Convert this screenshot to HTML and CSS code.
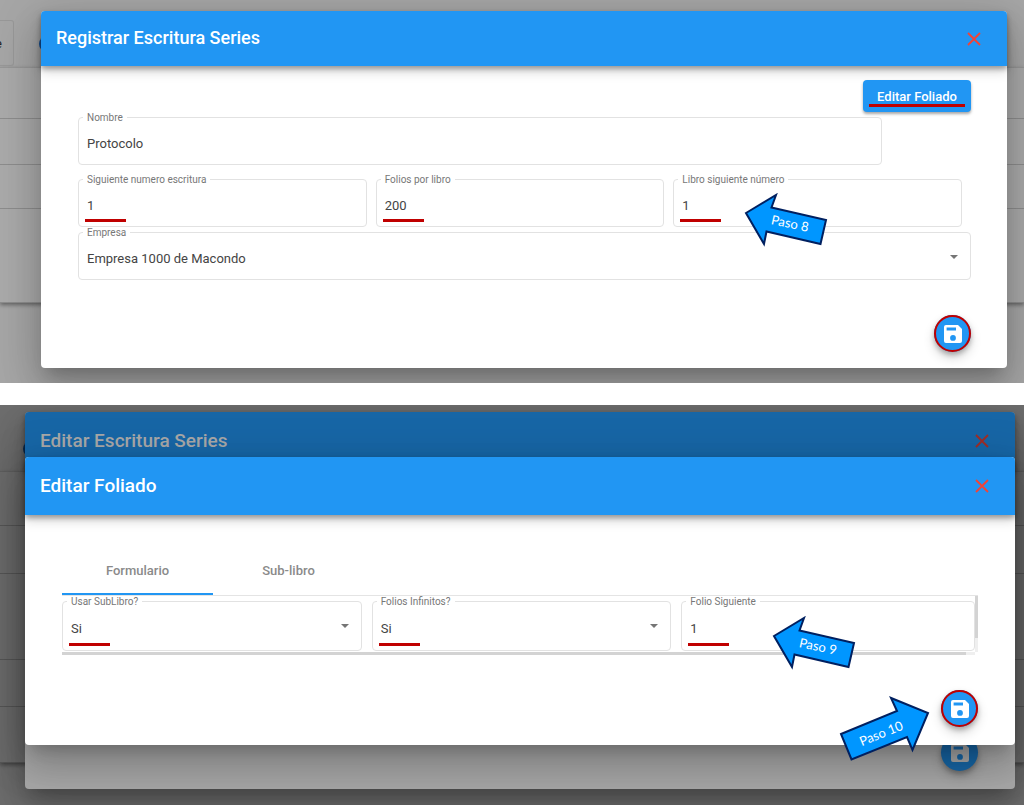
FILE: index.html
```html
<!DOCTYPE html>
<html lang="es">
<head>
    <meta charset="UTF-8">
    <meta name="viewport" content="width=device-width, initial-scale=1.0">
    <title>Escritura Series</title>
    <link rel="stylesheet" href="styles.css">
</head>
<body>

    <svg class="symbols" aria-hidden="true">
        <symbol id="icon-save" viewBox="0 0 24 24">
            <path fill-rule="evenodd" d="M17 3H5a2 2 0 0 0-2 2v14a2 2 0 0 0 2 2h14a2 2 0 0 0 2-2V7zM12 18.800a2.900 2.900 0 1 1 0-5.800 2.900 2.900 0 0 1 0 5.800zM15 8.600H5.600V5.500H15z"/>
        </symbol>
        <symbol id="icon-close" viewBox="0 0 14 14">
            <path d="M1 1l12 12M13 1L1 13" fill="none" stroke="currentColor" stroke-width="1.800"/>
        </symbol>
        <symbol id="arrow-left" viewBox="0 0 84 54">
            <path d="M2 20L32 2L27.500 14.500L82 27L76.500 51L22.500 38.500L20 51z"/>
        </symbol>
    </svg>

    <!-- Registrar -->
    <section class="screen">
        <div class="page">
            <div class="page-bar">
                <span class="page-box">e</span>
                <span class="page-dot"></span>
            </div>
            <div class="page-card">
                <div class="page-row h-51"></div>
                <div class="page-row h-46"></div>
                <div class="page-row h-44"></div>
                <div class="page-row h-94"></div>
            </div>
            <div class="page-foot tall"></div>
        </div>

        <div class="dialog dialog-register">
            <header class="dialog-header">
                <h2>Registrar Escritura Series</h2>
                <button class="close" aria-label="Cerrar"><svg><use href="#icon-close"/></svg></button>
            </header>
            <form class="dialog-body">
                <button type="button" class="btn"><span>Editar Foliado</span></button>
                <fieldset class="field field-name">
                    <legend><label for="nombre">Nombre</label></legend>
                    <input type="text" id="nombre" value="Protocolo">
                </fieldset>
                <div class="field-row">
                    <fieldset class="field marked">
                        <legend><label for="escritura">Siguiente numero escritura</label></legend>
                        <input type="text" id="escritura" value="1">
                    </fieldset>
                    <fieldset class="field marked">
                        <legend><label for="folios">Folios por libro</label></legend>
                        <input type="text" id="folios" value="200">
                    </fieldset>
                    <fieldset class="field marked">
                        <legend><label for="libro">Libro siguiente número</label></legend>
                        <input type="text" id="libro" value="1">
                        <svg class="step step-8" viewBox="0 0 84 54">
                            <use href="#arrow-left"/>
                            <text x="46" y="35" transform="rotate(12 46 30)">Paso 8</text>
                        </svg>
                    </fieldset>
                </div>
                <fieldset class="field field-select">
                    <legend><label for="empresa">Empresa</label></legend>
                    <select id="empresa"><option>Empresa 1000 de Macondo</option></select>
                </fieldset>
                <div class="actions">
                    <button type="button" class="fab ringed" aria-label="Guardar"><svg><use href="#icon-save"/></svg></button>
                </div>
            </form>
        </div>
    </section>

    <!-- Foliado -->
    <section class="screen screen-dark">
        <div class="page">
            <div class="page-bar">
                <span class="page-dot"></span>
            </div>
            <div class="page-card">
                <div class="page-row h-54"></div>
                <div class="page-row h-48"></div>
                <div class="page-row h-86"></div>
                <div class="page-row h-47"></div>
                <div class="page-row h-56"></div>
            </div>
            <div class="page-foot"></div>
        </div>

        <div class="dialog dialog-back">
            <header class="dialog-header">
                <h2>Editar Escritura Series</h2>
                <button class="close" aria-label="Cerrar"><svg><use href="#icon-close"/></svg></button>
            </header>
            <div class="actions">
                <button type="button" class="fab" aria-label="Guardar"><svg><use href="#icon-save"/></svg></button>
            </div>
        </div>

        <div class="dialog dialog-front">
            <header class="dialog-header">
                <h2>Editar Foliado</h2>
                <button class="close" aria-label="Cerrar"><svg><use href="#icon-close"/></svg></button>
            </header>
            <form class="dialog-body">
                <div class="tabs" role="tablist">
                    <button type="button" class="tab active" role="tab" aria-selected="true">Formulario</button>
                    <button type="button" class="tab" role="tab" aria-selected="false">Sub-libro</button>
                </div>
                <div class="scroller">
                    <div class="field-row">
                        <fieldset class="field field-select marked">
                            <legend><label for="sublibro">Usar SubLibro?</label></legend>
                            <select id="sublibro"><option>Si</option></select>
                        </fieldset>
                        <fieldset class="field field-select marked">
                            <legend><label for="infinitos">Folios Infinitos?</label></legend>
                            <select id="infinitos"><option>Si</option></select>
                        </fieldset>
                        <fieldset class="field marked">
                            <legend><label for="siguiente">Folio Siguiente</label></legend>
                            <input type="text" id="siguiente" value="1">
                            <svg class="step step-9" viewBox="0 0 84 54">
                                <use href="#arrow-left"/>
                                <text x="46" y="35" transform="rotate(12 46 30)">Paso 9</text>
                            </svg>
                        </fieldset>
                    </div>
                    <div class="bar bar-y"><div class="thumb"></div></div>
                    <div class="bar bar-x"><div class="thumb"></div></div>
                </div>
                <div class="actions">
                    <button type="button" class="fab ringed" aria-label="Guardar"><svg><use href="#icon-save"/></svg></button>
                    <svg class="step step-10" viewBox="0 0 92 66">
                        <path d="M3 38L59 15L53 2L90 17L74.500 54L69 41L13.500 63.500z"/>
                        <text x="43" y="42" transform="rotate(-22 43 37)">Paso 10</text>
                    </svg>
                </div>
            </form>
        </div>
    </section>

</body>
</html>
```
FILE: styles.css
```css
* {
    box-sizing: border-box;
}
body {
    margin: 0;
    background: #fff;
    font-family: Roboto, Arial, sans-serif;
    color: #444;
}
button, input, select {
    font-family: inherit;
    border: none;
    background: none;
    padding: 0;
    margin: 0;
}
button {
    cursor: pointer;
}
.symbols {
    display: none;
}

/* Each screen stacks the dimmed page and its dialogs in one cell */
.screen {
    display: grid;
    overflow: hidden;
    background: #a6a6a6;
    margin-bottom: 22px;
}
.screen > * {
    grid-area: 1 / 1;
    min-width: 0;
}
.screen-dark {
    background: #6e6e6e;
    margin-bottom: 0;
}

/* Dimmed page */
.page-bar {
    display: flex;
    align-items: flex-start;
    height: 67px;
    padding-top: 20px;
}
.page-box {
    width: 14px;
    height: 46px;
    border: 1px solid #989898;
    border-left: none;
    border-radius: 0 3px 3px 0;
    font-size: 13px;
    line-height: 46px;
    color: #222;
    text-indent: -5px;
}
.page-dot {
    width: 16px;
    height: 16px;
    margin: 16px 0 0 25px;
    border-radius: 50%;
    background: #16529a;
}
.page-card {
    border-top: 1px solid #979797;
    background: #aaa;
    box-shadow: 0 2px 4px rgba(0, 0, 0, 0.4);
}
.page-row {
    border-bottom: 1px solid #8d8d8d;
}
.h-44 { height: 44px; }
.h-46 { height: 46px; }
.h-47 { height: 47px; }
.h-48 { height: 48px; }
.h-51 { height: 51px; }
.h-54 { height: 54px; }
.h-56 { height: 56px; }
.h-86 { height: 86px; }
.h-94 { height: 94px; }
.page-foot {
    height: 42px;
}
.page-foot.tall {
    height: 80px;
}
.screen-dark .page-bar {
    height: 66px;
}
.screen-dark .page-dot {
    margin-left: 23px;
    background: #0e335e;
}
.screen-dark .page-card {
    border-color: #626262;
    background: #707070;
}
.screen-dark .page-row {
    border-color: #5a5a5a;
}

/* Dialogs */
.dialog {
    position: relative;
    display: flex;
    flex-direction: column;
    border-radius: 4px;
    background: #fff;
    box-shadow: 0 11px 15px -7px rgba(0, 0, 0, 0.2),
                0 24px 38px 3px rgba(0, 0, 0, 0.14),
                0 9px 46px 8px rgba(0, 0, 0, 0.12);
}
.dialog-register {
    margin: 11px 17px 15px 41px;
}
.dialog-back {
    z-index: 1;
    margin: 7px 9px 16px 25px;
    background: #a8a8a8;
}
.dialog-front {
    z-index: 2;
    margin: 52px 9px 60px 25px;
}
.dialog-header {
    display: flex;
    align-items: center;
    justify-content: space-between;
    height: 55px;
    padding: 0 26px 0 15px;
    border-radius: 4px 4px 0 0;
    background: #2196f3;
    color: #fff;
    box-shadow: 0 3px 5px rgba(0, 0, 0, 0.3), 0 6px 12px rgba(0, 0, 0, 0.16);
}
.dialog-header h2 {
    margin: 0;
    padding-bottom: 2px;
    font-size: 19px;
    font-weight: 500;
}
.dialog-register .dialog-header h2 {
    font-size: 18px;
}
.dialog-back .dialog-header {
    height: 58px;
    background: #1766a6;
    color: #a8a8a8;
}
.dialog-front .dialog-header {
    height: 58px;
}
.close {
    display: flex;
    color: #f44336;
}
.close svg {
    width: 14px;
    height: 14px;
}
.dialog-back .close {
    color: #a02d26;
}
.dialog-body {
    display: flex;
    flex-direction: column;
    padding: 14px 36px 16px 37px;
}
.dialog-front .dialog-body {
    padding: 32px 37px 18px;
}

.btn {
    align-self: flex-end;
    width: 108px;
    height: 32px;
    border-radius: 4px;
    background: #2196f3;
    color: #fff;
    font-size: 13px;
    font-weight: 500;
    box-shadow: 0 2px 3px rgba(0, 0, 0, 0.35);
}
.btn span {
    display: block;
    margin: 0 6px;
    padding-top: 4px;
    line-height: 15px;
    border-bottom: 3px solid #c00000;
}

/* Outlined fields, the legend cuts the border */
.field {
    position: relative;
    min-width: 0;
    height: 53px;
    margin: 0;
    padding: 5px 4px 0;
    border: 1px solid #e2e2e2;
    border-radius: 4px;
}
.field legend {
    height: 10px;
    padding: 0 4px;
    font-size: 10px;
    line-height: 12px;
    color: #777;
}
.field legend label {
    display: block;
}
.field input, .field select {
    display: block;
    width: 100%;
    height: 32px;
    padding: 0 4px;
    font-size: 13px;
    color: #444;
    outline: none;
    appearance: none;
}
.field-name {
    width: 90%;
    margin-bottom: 9px;
}
.field-row {
    display: grid;
    grid-template-columns: 1fr 1fr 1fr;
    gap: 9px;
    margin-right: 9px;
}
.field-select::after {
    content: "";
    position: absolute;
    right: 12px;
    top: 18px;
    border: 4px solid transparent;
    border-top-color: #757575;
    border-bottom: none;
}
.marked::before {
    content: "";
    position: absolute;
    left: 6px;
    bottom: 4px;
    width: 41px;
    height: 3px;
    background: #c00000;
}

/* Tabs */
.tabs {
    display: flex;
    border-bottom: 1px solid #e4e4e4;
}
.tab {
    width: 151px;
    height: 48px;
    border-bottom: 2px solid transparent;
    font-size: 13px;
    font-weight: 500;
    color: #8a8a8a;
}
.tab.active {
    border-color: #2196f3;
}
.scroller {
    display: grid;
    grid-template-columns: 1fr 3px;
}
.scroller .field-row {
    grid-template-columns: 1fr 1fr 0.98fr;
    gap: 10px;
    margin: 0 0 1px;
}
.scroller .field {
    height: 55px;
}
.scroller .field input, .scroller .field select {
    height: 34px;
}
.bar {
    background: #efefef;
}
.bar .thumb {
    background: #d3d3d3;
}
.bar-y .thumb {
    height: 75%;
}
.bar-x {
    height: 3px;
}
.bar-x .thumb {
    width: 99%;
    height: 3px;
}

/* Save button */
.actions {
    position: relative;
    display: flex;
    justify-content: flex-end;
    padding-top: 35px;
}
.dialog-back .actions {
    margin-top: auto;
    padding: 0 37px 18px;
}
.fab {
    position: relative;
    display: flex;
    align-items: center;
    justify-content: center;
    width: 37px;
    height: 37px;
    border-radius: 50%;
    background: #2196f3;
    box-shadow: 0 3px 5px rgba(0, 0, 0, 0.25), 0 6px 12px rgba(0, 0, 0, 0.16);
}
.fab svg {
    width: 24px;
    height: 24px;
    fill: #fff;
}
.fab.ringed::after {
    content: "";
    position: absolute;
    inset: 0;
    border: 2px solid #c00000;
    border-radius: 50%;
}
.dialog-back .fab {
    background: #1766a6;
}
.dialog-back .fab svg {
    fill: #a8a8a8;
}

/* Step arrows */
.step {
    position: absolute;
    z-index: 1;
    width: 84px;
    height: 54px;
    fill: #0096ff;
    stroke: #002060;
    stroke-width: 2;
}
.step text {
    fill: #fff;
    stroke: none;
    font-family: Lato, Carlito, sans-serif;
    font-size: 13px;
    text-anchor: middle;
}
.step-8 {
    left: 70px;
    bottom: -21px;
}
.step-9 {
    left: 90px;
    bottom: -20px;
}
.step-10 {
    right: 48px;
    bottom: -35px;
    width: 92px;
    height: 66px;
}
```
